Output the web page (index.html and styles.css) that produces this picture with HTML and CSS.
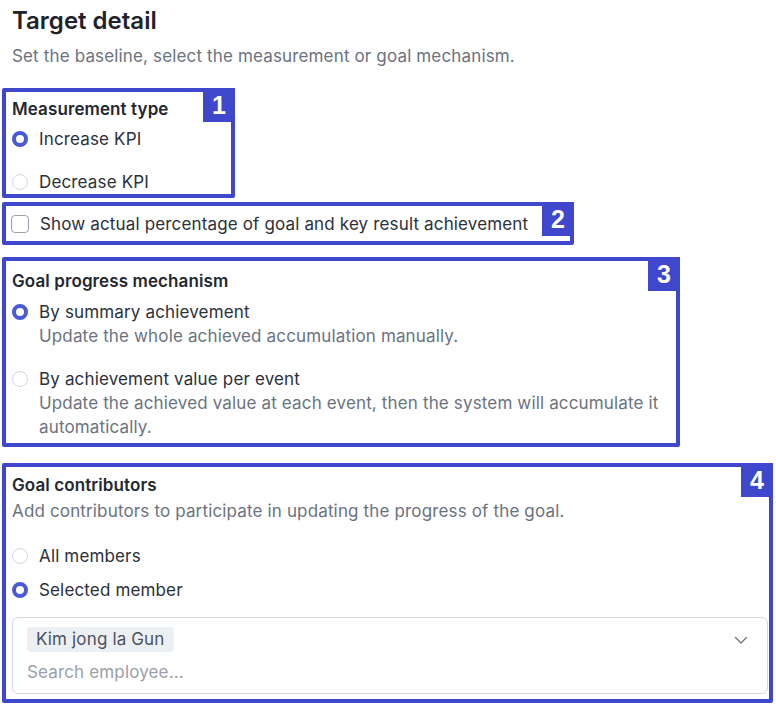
FILE: index.html
```html
<!DOCTYPE html>
<html>
<head>
<meta charset="utf-8">
<link rel="stylesheet" href="styles.css">
</head>
<body>
<div class="page">
  <h1 class="title">Target detail</h1>
  <p class="subtitle">Set the baseline, select the measurement or goal mechanism.</p>

  <section class="box box-1">
    <div class="badge">1</div>
    <div class="label">Measurement type</div>
    <div class="radio-row r-first"><span class="radio checked"></span><span>Increase KPI</span></div>
    <div class="radio-row r-second"><span class="radio"></span><span>Decrease KPI</span></div>
  </section>

  <section class="box box-2">
    <div class="badge">2</div>
    <div class="check-row"><span class="checkbox"></span><span>Show actual percentage of goal and key result achievement</span></div>
  </section>

  <section class="box box-3">
    <div class="badge">3</div>
    <div class="label">Goal progress mechanism</div>
    <div class="option o-first">
      <div class="radio-row"><span class="radio checked"></span><span>By summary achievement</span></div>
      <div class="desc indent">Update the whole achieved accumulation manually.</div>
    </div>
    <div class="option o-second">
      <div class="radio-row"><span class="radio"></span><span>By achievement value per event</span></div>
      <div class="desc indent">Update the achieved value at each event, then the system will accumulate it automatically.</div>
    </div>
  </section>

  <section class="box box-4">
    <div class="badge">4</div>
    <div class="label">Goal contributors</div>
    <div class="desc c-desc">Add contributors to participate in updating the progress of the goal.</div>
    <div class="radio-row c-all"><span class="radio"></span><span>All members</span></div>
    <div class="radio-row c-sel"><span class="radio checked"></span><span>Selected member</span></div>
    <div class="select">
      <div class="select-top">
        <span class="tag">Kim jong la Gun</span>
        <svg class="chevron" width="14" height="14" viewBox="0 0 14 14"><path d="M1.5 4.5 L7 10 L12.5 4.5" fill="none" stroke="#6b7280" stroke-width="1.3" stroke-linecap="round" stroke-linejoin="round"/></svg>
      </div>
      <div class="placeholder">Search employee...</div>
    </div>
  </section>
</div>
</body>
</html>
```

FILE: styles.css
```css
* { box-sizing: border-box; }
html, body { margin: 0; padding: 0; background: #ffffff; }
body {
  font-family: Inter, "Noto Sans", sans-serif;
  font-size: 17px;
  letter-spacing: 0.15px;
  color: #2b303b;
}
.page {
  width: 776px;
  height: 707px;
  overflow: hidden;
  padding-top: 6px;
}
.title {
  margin: 0 0 0 12px;
  font-size: 24px;
  line-height: 30px;
  font-weight: 600;
  letter-spacing: 0;
  color: #1f2329;
}
.subtitle {
  margin: 10px 0 0 12px;
  font-size: 17px;
  line-height: 20px;
  color: #6b7280;
}
.box {
  position: relative;
  margin-left: 2px;
  border: 4px solid #3f48cc;
  border-radius: 2px;
  padding-left: 6px;
}
.badge {
  position: absolute;
  top: -4px;
  right: -4px;
  width: 32px;
  height: 34px;
  background: #3f48cc;
  color: #ffffff;
  font-family: "Liberation Sans", Arial, sans-serif;
  font-weight: 700;
  font-size: 25px;
  letter-spacing: 0;
  line-height: 34px;
  text-align: center;
}
.label {
  font-size: 17px;
  line-height: 20px;
  font-weight: 600;
  letter-spacing: 0.1px;
  color: #23272f;
}
.desc {
  line-height: 24px;
  color: #6b7280;
}
.indent { padding-left: 27px; }
.radio-row {
  display: flex;
  align-items: center;
  gap: 11px;
  line-height: 24px;
}
.radio {
  width: 16px;
  height: 16px;
  border-radius: 50%;
  border: 1px solid #d5d9e0;
  background: #fff;
  flex: none;
}
.radio.checked {
  border: 4px solid #4a58d9;
}

.box-1 { width: 233px; height: 110px; margin-top: 22px; padding-top: 7px; }
.box-1 .r-first { margin-top: 8px; }
.box-1 .r-second { margin-top: 19px; }

.box-2 { width: 572px; height: 43px; margin-top: 4px; padding-top: 6px; padding-left: 5px; }
.check-row {
  display: flex;
  align-items: center;
  gap: 11px;
  line-height: 24px;
}
.checkbox {
  width: 18px;
  height: 18px;
  border: 1px solid #9aa1ad;
  border-radius: 4px;
  flex: none;
}

.box-3 { width: 678px; height: 190px; margin-top: 12px; padding-top: 10px; }
.o-first { margin-top: 9px; }
.o-second { margin-top: 19px; }
.box-3 .desc { padding-right: 12px; }

.box-4 { width: 771px; height: 240px; margin-top: 16px; padding-top: 8px; padding-right: 1px; }
.c-desc { margin-top: 4px; }
.c-all { margin-top: 21px; }
.c-sel { margin-top: 10px; }
.select {
  margin-top: 15px;
  height: 77px;
  border: 1px solid #d4d8df;
  border-radius: 6px;
  padding: 9px 0 0 14px;
}
.select-top {
  display: flex;
  align-items: center;
  justify-content: space-between;
  padding-right: 19px;
}
.tag {
  display: inline-block;
  height: 25px;
  line-height: 25px;
  padding: 0 9px;
  background: #edf0f3;
  border-radius: 4px;
  color: #4b5260;
}
.chevron { display: block; }
.placeholder {
  margin-top: 8px;
  line-height: 24px;
  color: #9aa0aa;
}
```
